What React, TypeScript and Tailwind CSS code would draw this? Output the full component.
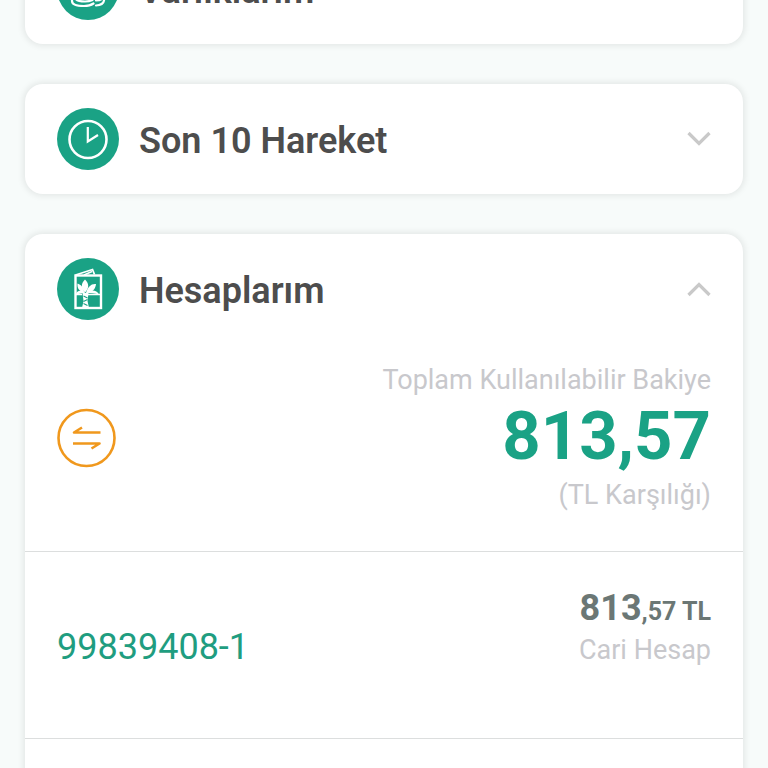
import { useState } from "react";
import type { ReactNode } from "react";

type CardProps = {
  title: string;
  icon: ReactNode;
  open?: boolean;
  onToggle?: () => void;
  children?: ReactNode;
};

const accounts = [
  { no: "99839408-1", whole: "813", rest: ",57 TL", type: "Cari Hesap" },
];

const CoinsIcon = () => (
  <svg
    viewBox="0 0 62 62"
    className="size-full"
    fill="none"
    stroke="white"
    strokeWidth="2.200"
    strokeLinecap="round"
  >
    <ellipse cx="27" cy="22" rx="12" ry="5" />
    <path d="M15 22v21c0 3.500 6 5 12 5 4 0 7-.8 9.500-2.500" />
    <path d="M15 30c0 3 6 5 12 5s12-2 12-5v-8" />
    <path d="M18 40c1 2 5 3.500 10 3.500 3 0 5-.4 7.500-1.500" />
    <path d="M39 42.500c4 0 7-1.500 8-4.500M39 47.500c4.500-.3 7.500-2 8-5v-9" />
  </svg>
);

const ClockIcon = () => (
  <svg viewBox="0 0 62 62" className="size-full" fill="none" stroke="white">
    <circle cx="31" cy="31.500" r="18.500" strokeWidth="2.600" />
    <path d="M30.800 19v14.500l10.200-6.500" strokeWidth="2.200" />
  </svg>
);

const PassbookIcon = () => (
  <svg viewBox="0 0 62 62" className="size-full" fill="none" stroke="white">
    <rect x="18.500" y="17.500" width="25.500" height="32.500" strokeWidth="2.400" />
    <path d="M18.500 17 35.500 11.500l2 5" strokeWidth="1.800" />
    <path d="M27 17 35 13.500" strokeWidth="1.600" />
    <path d="M19 36.500h6M31 36.500h13" strokeWidth="1.600" />
    <g fill="white" stroke="none">
      <path d="M28 21.500c-4 4-4.500 8 0 13 4.500-5 4-9 0-13z" />
      <path d="M20.500 25.500c-.5 4.500 1.500 7.500 6.500 9.500 0-4.500-2-8-6.500-9.500z" />
      <path d="M39 26c-5-.5-8.500 3-10 9 5 0 9.500-3 10-9z" />
      <path d="M19 36.500c.5-4 5-5 9.500-1.800-3.500.3-6 .9-9.500 1.800z" />
      <path d="M42 36.500c-2-4.500-8-5.500-13-1.800 5 .1 9 .5 13 1.800z" />
      <path d="M25.500 35h6l-1 8 1.500 7h-7l1.500-7z" />
    </g>
    <path
      d="M26.500 38l4 2M30.500 41.500l-4 2M26.500 45.500l4 2"
      stroke="#1aa285"
      strokeWidth="1.100"
    />
  </svg>
);

const Chevron = ({ up }: { up?: boolean }) => (
  <svg
    viewBox="0 0 24 16"
    className="h-4 w-6 shrink-0"
    fill="none"
    stroke="#c9c9c9"
    strokeWidth="3.200"
  >
    <path d={up ? "M1.500 14 12 3.500l10.500 10.500" : "M1.500 2 12 12.500 22.500 2"} />
  </svg>
);

const Card = ({ title, icon, open, onToggle, children }: CardProps) => {
  return (
    <section className="rounded-[18px] bg-white shadow-[0_0_6px_2px_rgba(0,0,0,0.08)]">
      <h2>
        <button
          type="button"
          aria-expanded={!!open}
          onClick={onToggle}
          className="flex h-[110px] w-full items-center gap-5 px-8 text-left"
        >
          <span className="size-[62px] shrink-0 rounded-full bg-[#1aa285]">
            {icon}
          </span>
          <span className="grow pt-1 text-[36px] leading-10 font-semibold text-[#4d4d4d]">
            {title}
          </span>
          <Chevron up={open} />
        </button>
      </h2>
      {open && children}
    </section>
  );
};

const App = () => {
  const [accountsOpen, setAccountsOpen] = useState(true);

  return (
    <div className="h-screen overflow-hidden bg-[#f7fbfa] font-['Roboto',sans-serif]">
      <main className="-mt-[66px] flex flex-col gap-10 px-[25px]">
        <Card title="Varlıklarım" icon={<CoinsIcon />} />
        <Card title="Son 10 Hareket" icon={<ClockIcon />} />
        <Card
          title="Hesaplarım"
          icon={<PassbookIcon />}
          open={accountsOpen}
          onToggle={() => setAccountsOpen(!accountsOpen)}
        >
          <div className="flex items-center justify-between px-8 pt-4 pb-9">
            <button
              type="button"
              aria-label="Transfer"
              className="size-[60px] shrink-0"
            >
              <svg
                viewBox="0 0 60 60"
                className="size-full"
                fill="none"
                stroke="#f0981d"
                strokeWidth="2.600"
              >
                <circle cx="29.500" cy="30" r="28" />
                <path d="M43.500 24.500H17l8-5" strokeLinejoin="round" />
                <path d="M16 35.500h26.500l-8 5" strokeLinejoin="round" />
              </svg>
            </button>
            <div className="text-right text-[27px] leading-10 text-[#c8c8cc]">
              <p>Toplam Kullanılabilir Bakiye</p>
              <p className="text-[67px] leading-[72px] font-bold text-[#1aa285]">
                813,57
              </p>
              <p className="mt-[3px]">(TL Karşılığı)</p>
            </div>
          </div>
          <ul>
            {accounts.map((account) => (
              <li
                key={account.no}
                className="flex min-h-[188px] items-center justify-between border-y border-[#dcdede] px-8"
              >
                <a
                  href="#"
                  className="pt-1 text-[36px] leading-10 text-[#1f9d80]"
                >
                  {account.no}
                </a>
                <div className="self-start pt-9 text-right">
                  <p className="text-[25px] leading-10 font-bold text-[#6b7775]">
                    <span className="text-[36px]">{account.whole}</span>
                    {account.rest}
                  </p>
                  <p className="text-[27px] leading-9 text-[#c8c8cc]">
                    {account.type}
                  </p>
                </div>
              </li>
            ))}
            <li className="min-h-[188px]"></li>
          </ul>
        </Card>
      </main>
    </div>
  );
};

export default App;
